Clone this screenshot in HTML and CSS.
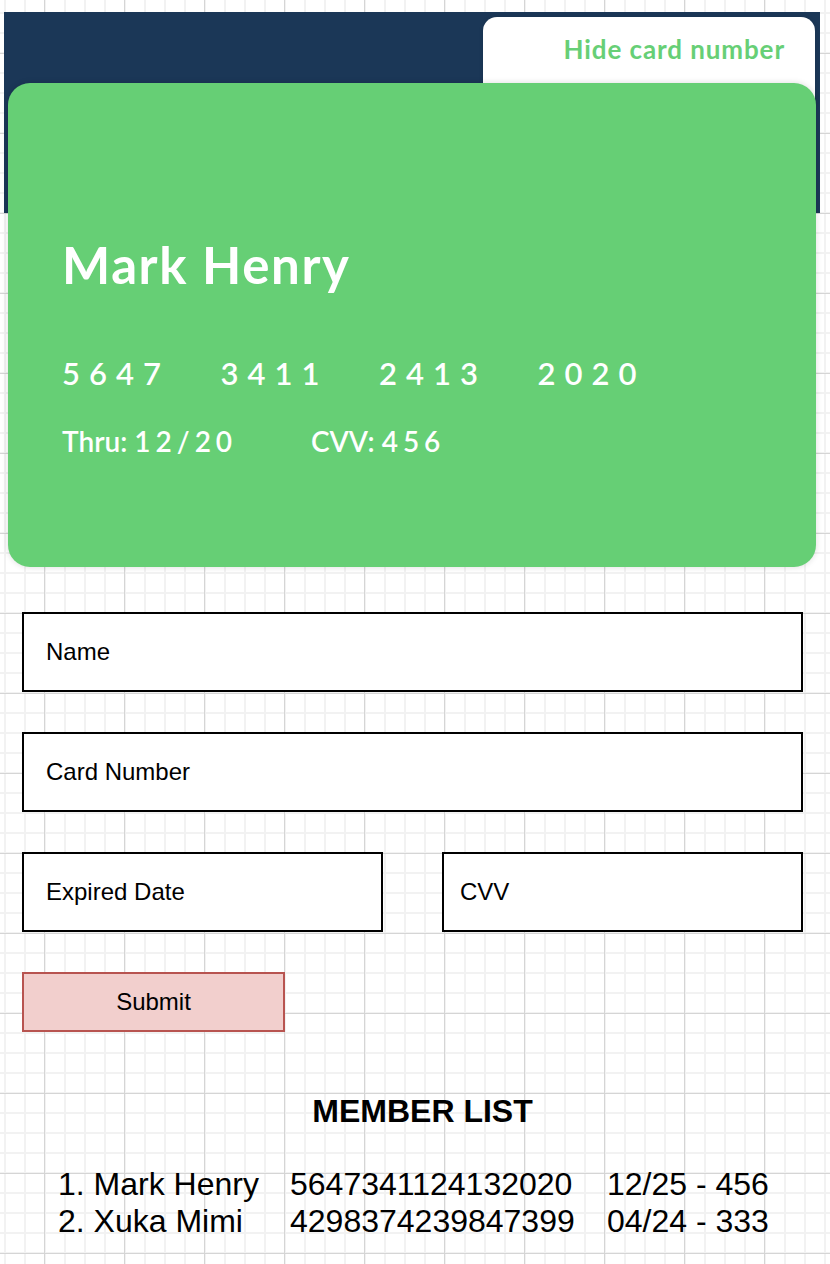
FILE: index.html
```html
<!DOCTYPE html>
<html lang="en">
<head>
<meta charset="utf-8">
<title>Card</title>
<link rel="stylesheet" href="styles.css">
</head>
<body>
<div class="header">
  <div class="tab"><span class="tab-label">Hide card number</span></div>
</div>
<div class="card">
  <div class="card-name">Mark Henry</div>
  <div class="card-number"><span class="group">5647</span><span class="group">3411</span><span class="group">2413</span><span class="group">2020</span></div>
  <div class="card-meta"><span class="thru">Thru: <span class="digits">12/20</span></span><span class="cvv">CVV: <span class="digits">456</span></span></div>
</div>
<form class="form">
  <div class="field">Name</div>
  <div class="field">Card Number</div>
  <div class="field-row">
    <div class="field">Expired Date</div>
    <div class="field field-cvv">CVV</div>
  </div>
  <div class="submit">Submit</div>
</form>
<section class="members">
  <h2 class="members-title">MEMBER LIST</h2>
  <div class="member"><span>1. Mark Henry</span><span>5647341124132020</span><span>12/25 - 456</span></div>
  <div class="member"><span>2. Xuka Mimi</span><span>4298374239847399</span><span>04/24 - 333</span></div>
</section>
</body>
</html>
```
FILE: styles.css
```css
html, body {
  margin: 0;
  padding: 0;
  min-height: 1264px;
}
body {
  background-color: #ffffff;
  background-image:
    linear-gradient(to right, #d5d5d5 1px, transparent 1px),
    linear-gradient(to bottom, #d5d5d5 1px, transparent 1px),
    linear-gradient(to right, #f2f2f2 2px, transparent 2px),
    linear-gradient(to bottom, #f2f2f2 2px, transparent 2px);
  background-size: 80px 80px, 80px 80px, 20px 20px, 20px 20px;
  background-position: 44px 53px, 44px 53px, 4px 12px, 4px 12px;
  font-family: "Liberation Sans", Arial, sans-serif;
  overflow: hidden;
}
.header {
  margin: 12px 10px 0 4px;
  height: 201px;
  background: #1b3757;
  display: flex;
  justify-content: flex-end;
  align-items: flex-start;
  padding: 5px 5px 0 0;
  box-sizing: border-box;
}
.tab {
  width: 332px;
  height: 90px;
  background: #ffffff;
  border-radius: 14px 14px 0 0;
  box-shadow: 0 0 4px rgba(0,0,0,0.12);
  box-sizing: border-box;
  padding: 17px 30px 0 0;
  text-align: right;
}
.tab-label {
  font-family: Lato, "Open Sans", sans-serif;
  font-weight: 700;
  font-size: 26px;
  line-height: 30px;
  letter-spacing: 0.9px;
  color: #67cf76;
}
.card {
  position: relative;
  margin: -130px 14px 0 8px;
  height: 484px;
  background: #66cf75;
  border-radius: 22px;
  box-shadow: 0 0 6px rgba(0,0,0,0.14);
  box-sizing: border-box;
  padding: 152px 0 0 54px;
  color: #ffffff;
  font-family: Lato, "Open Sans", sans-serif;
}
.card-name {
  font-weight: 700;
  font-size: 51px;
  line-height: 60px;
  letter-spacing: 1.6px;
}
.card-number {
  margin-top: 58px;
  font-size: 31px;
  line-height: 40px;
  font-weight: 600;
  letter-spacing: 9px;
  display: flex;
}
.card-number .group {
  width: 158.5px;
}
.card-meta {
  margin-top: 30px;
  font-size: 28px;
  line-height: 36px;
  font-weight: 600;
  display: flex;
}
.card-meta .digits {
  letter-spacing: 5px;
}
.thru {
  width: 249px;
}
.form {
  margin: 45px 27px 0 22px;
  display: flex;
  flex-direction: column;
  gap: 40px;
}
.field {
  height: 80px;
  border: 2px solid #000000;
  background: #ffffff;
  box-sizing: border-box;
  display: flex;
  align-items: center;
  padding-left: 22px;
  font-size: 24px;
  color: #000000;
}
.field-row {
  display: grid;
  grid-template-columns: 1fr 1fr;
  gap: 59px;
}
.field-row .field-cvv {
  padding-left: 16px;
}
.submit {
  width: 263px;
  height: 60px;
  box-sizing: border-box;
  border: 2px solid #b85450;
  background: #f2cfcd;
  display: flex;
  align-items: center;
  justify-content: center;
  font-size: 24px;
  color: #000000;
}
.members {
  margin: 61px 7px 0 22px;
}
.members-title {
  margin: 0;
  text-align: center;
  font-size: 32px;
  line-height: 36px;
  font-weight: 700;
}
.member {
  display: grid;
  grid-template-columns: 232px 317px auto;
  margin-left: 36px;
  font-size: 32px;
  line-height: 37px;
}
.members-title + .member {
  margin-top: 37px;
}
```
